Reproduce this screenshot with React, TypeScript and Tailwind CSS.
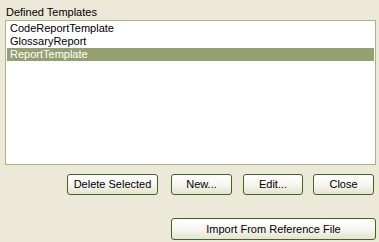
export default function App() {
  const items = ["CodeReportTemplate", "GlossaryReport", "ReportTemplate"];
  const selected = 2;
  const btn =
    "h-[21px] rounded-[3px] border border-[#3b6a1c] bg-gradient-to-b from-white via-[#f7f6f0] to-[#e6e3d3] text-[11px] leading-none text-black flex items-center justify-center";

  return (
    <div
      className="w-[379px] h-[242px] bg-[#ece9d8] flex flex-col overflow-hidden"
      style={{ fontFamily: '"Liberation Sans", Arial, sans-serif' }}
    >
      <div className="pl-[6px] pt-[6px] h-[20px] text-[11px] leading-[13px] text-black">Defined Templates</div>
      <div className="ml-[5px] w-[371px] h-[145px] border border-[#a5b97f] bg-white p-[1px]">
        {items.map((t, i) => (
          <div
            key={t}
            className={
              "h-[13px] pl-[3px] text-[11px] leading-[13px] " +
              (i === selected ? "bg-[#94a070] text-white" : "text-black")
            }
          >
            {t}
          </div>
        ))}
      </div>
      <div className="flex mt-[9px] pl-[67px]">
        <button className={btn + " w-[91px]"}>Delete Selected</button>
        <button className={btn + " w-[61px] ml-[13px]"}>New...</button>
        <button className={btn + " w-[60px] ml-[11px]"}>Edit...</button>
        <button className={btn + " w-[61px] ml-[10px]"}>Close</button>
      </div>
      <div className="flex mt-[23px] pl-[171px]">
        <button className={btn + " w-[205px] h-[22px]"}>Import From Reference File</button>
      </div>
    </div>
  );
}
